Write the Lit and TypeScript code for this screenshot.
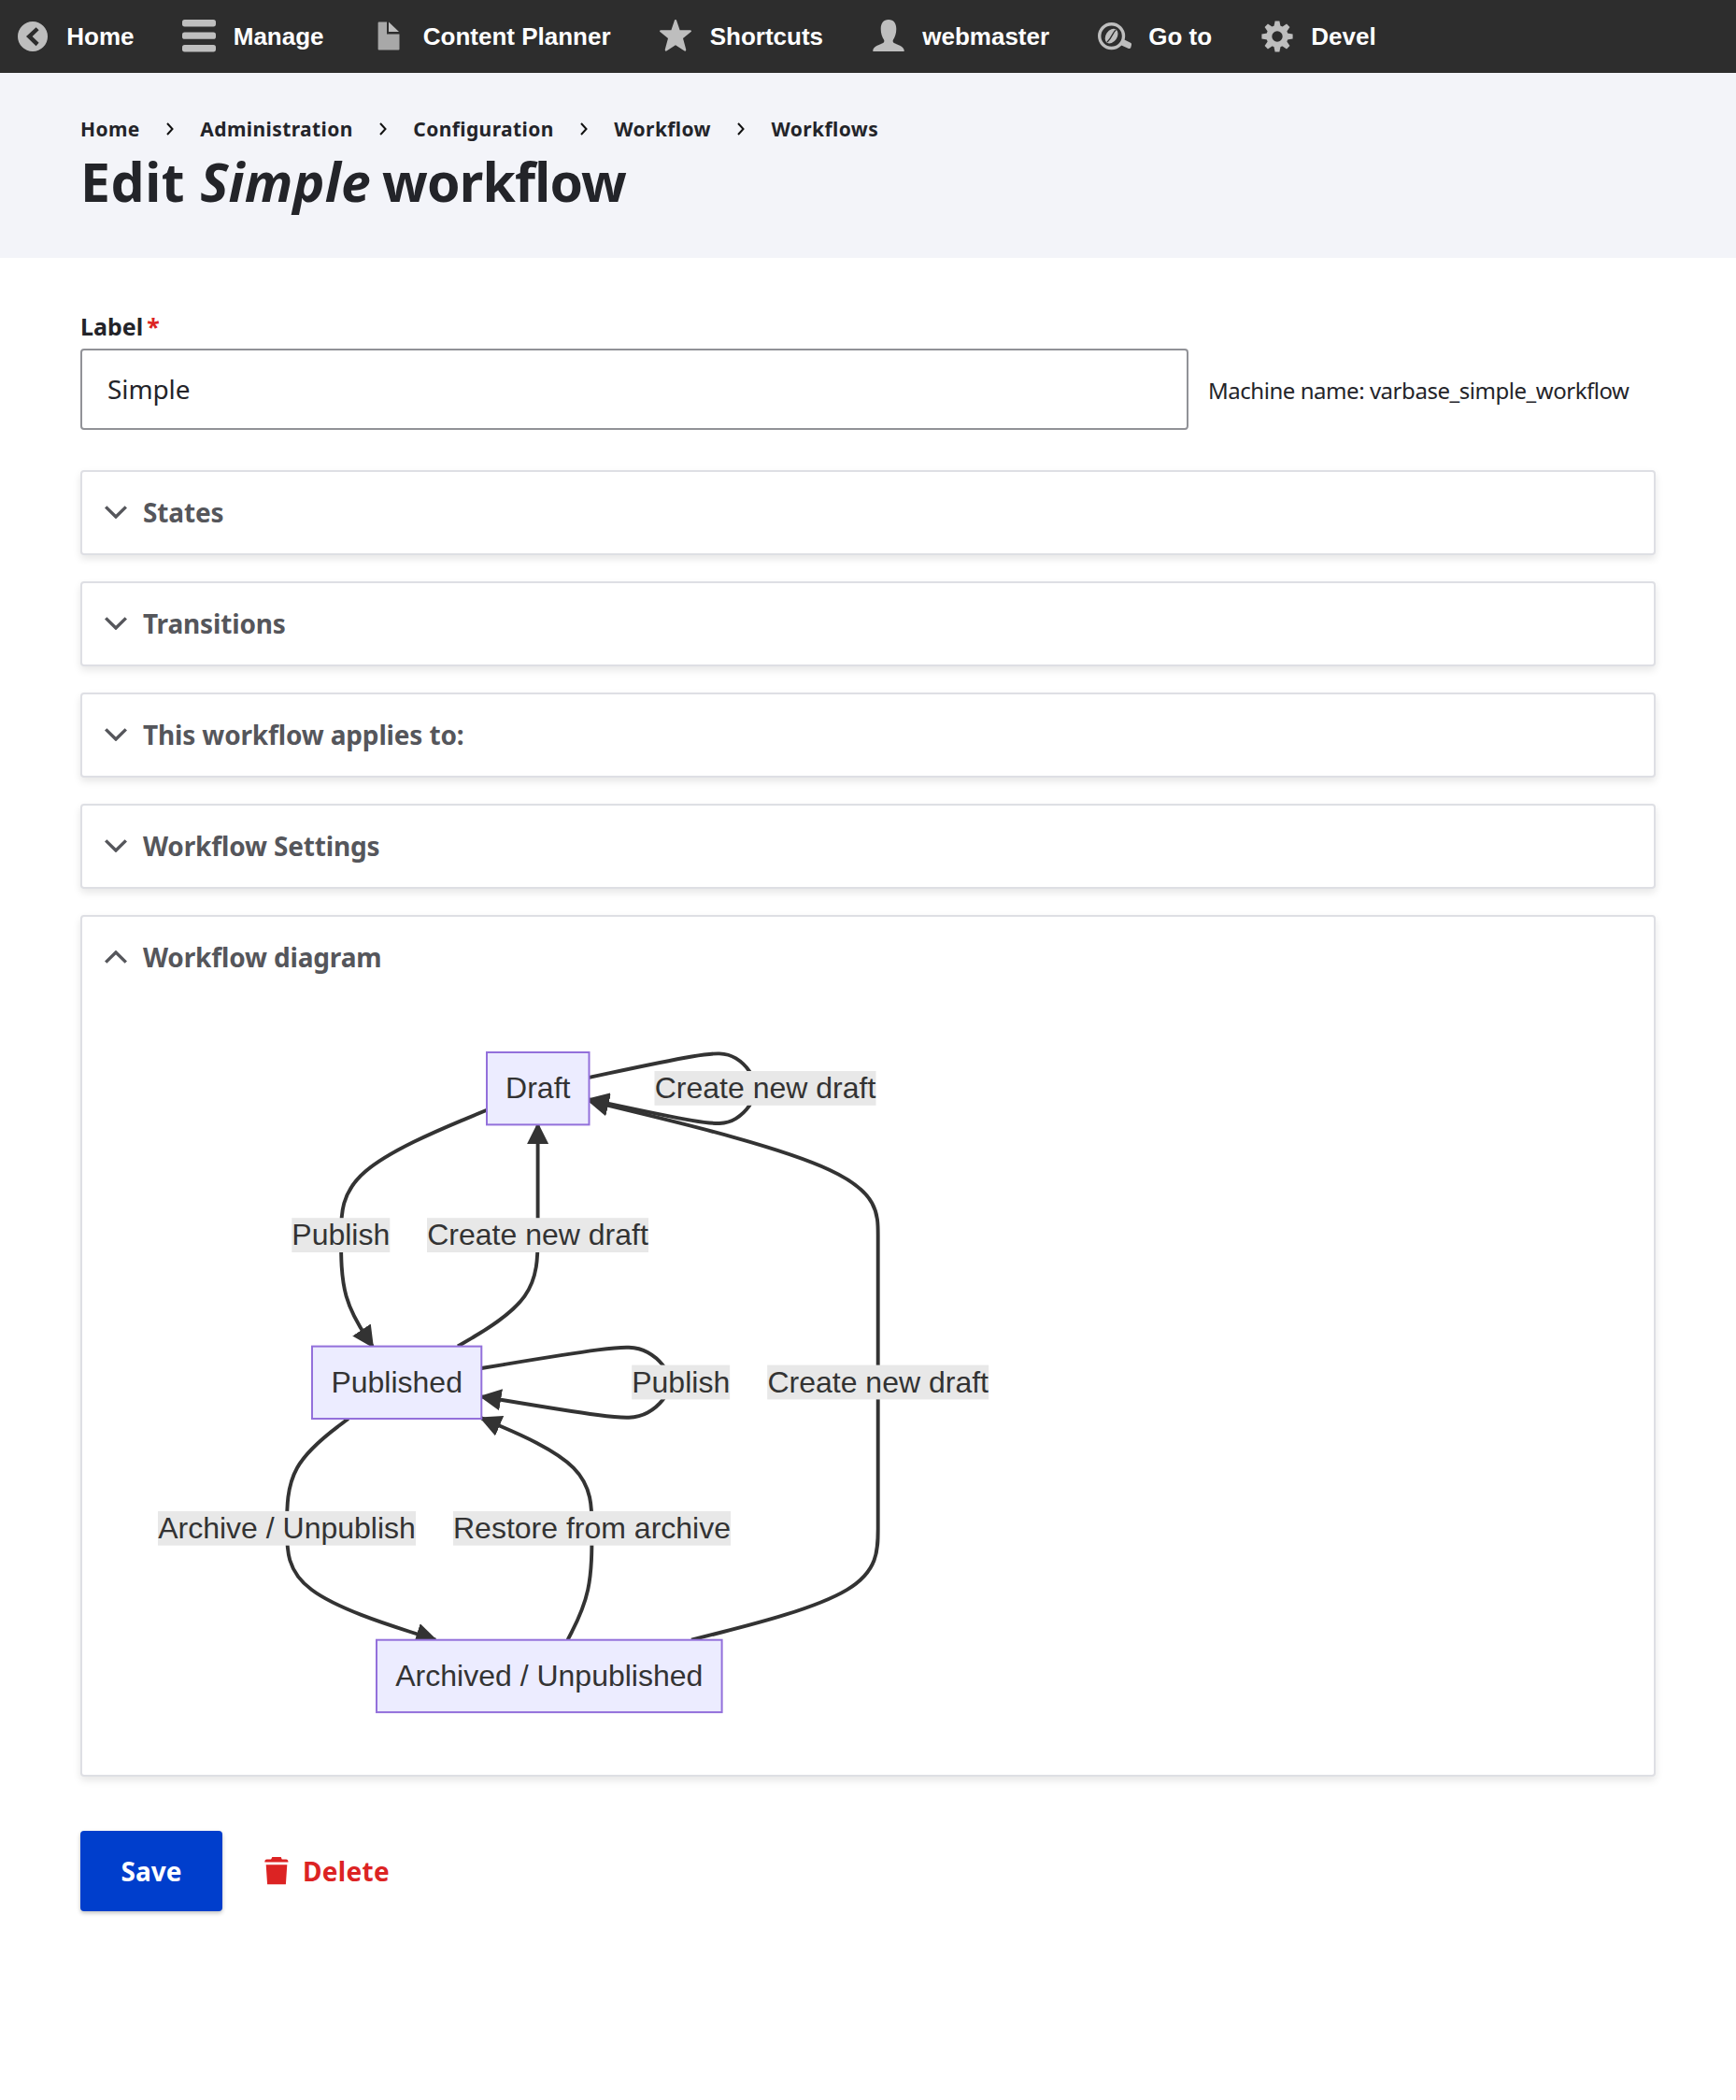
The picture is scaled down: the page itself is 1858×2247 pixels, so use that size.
import { LitElement, html, css, svg, nothing } from "lit";
import { customElement } from "lit/decorators.js";

type Point = [number, number];

const round = (n: number) => Math.round(n * 100) / 100;

/** Open uniform cubic B-spline through the given control points. */
function basisPath(points: Point[]): string {
  const [first] = points;
  let [x0, y0] = first;
  let [x1, y1] = points[1];
  let d = `M${x0},${y0}L${round((5 * x0 + x1) / 6)},${round((5 * y0 + y1) / 6)}`;
  const curve = (x: number, y: number) => {
    d += `C${[
      (2 * x0 + x1) / 3, (2 * y0 + y1) / 3,
      (x0 + 2 * x1) / 3, (y0 + 2 * y1) / 3,
      (x0 + 4 * x1 + x) / 6, (y0 + 4 * y1 + y) / 6,
    ].map(round).join(",")}`;
    x0 = x1; y0 = y1; x1 = x; y1 = y;
  };
  points.slice(2).forEach(([x, y]) => curve(x, y));
  curve(x1, y1);
  return `${d}L${x1},${y1}`;
}

const chevronPath = "M1.2 1.4 L12 12 L22.8 1.4";

const toolbarItems = [
  {
    label: "Home",
    icon: svg`<path fill-rule="evenodd" d="M18 2a16 16 0 1 0 0 32a16 16 0 1 0 0-32zM21.6 8.2L24.6 11.2L17.6 18L24.6 24.8L21.6 28.2L11 18z"/>`,
  },
  {
    label: "Manage",
    icon: svg`<rect y="0" width="36" height="7.4" rx="2.6"/><rect y="13.4" width="36" height="7.4" rx="2.6"/><rect y="27" width="36" height="7.4" rx="2.6"/>`,
  },
  {
    label: "Content Planner",
    icon: svg`<path fill="#a8a8a8" d="M7 2.4h9v13h13.5v16a1 1 0 0 1-1 1H7.6a1 1 0 0 1-1-1V3.4a1 1 0 0 1 1-1z"/><path d="M18 2.6L29 13H18z"/>`,
  },
  {
    label: "Shortcuts",
    icon: svg`<path d="M18 0c.8 0 1 .6 1.3 1.400l3.300 9.800h11c1.600 0 1.800 1.200.7 2.100l-8.300 6.700l3.200 11.800c.3 1.700-.8 2.300-2 1.500L18 27.200l-9.200 6.100c-1.300.8-2.300.2-2-1.500L10 20l-8.300-6.700c-1.100-.9-.8-2.100.7-2.100h11l3.300-9.800C17 .6 17.200 0 18 0z"/>`,
  },
  {
    label: "webmaster",
    icon: svg`<path d="M18 0c5.600 0 8.300 4 8.300 10c0 4.600-1.500 9-3.300 11.600c-.7 1.200-.5 2.600.8 3.400c2.600 1.500 10.600 3 11 8.200c0 .6-.4.9-1 .9H2.200c-.6 0-1-.3-1-.9c.4-5.200 8.400-6.700 11-8.200c1.300-.8 1.500-2.200.8-3.400C11.200 19 9.700 14.600 9.700 10c0-6 2.700-10 8.300-10z"/>`,
  },
  {
    label: "Go to",
    icon: svg`<path fill-rule="evenodd" d="M14.600 3a14.600 14.600 0 1 0 0 29.200a14.600 14.600 0 1 0 0-29.200zM14.600 6.400a11.200 11.200 0 1 1 0 22.400a11.200 11.200 0 1 1 0-22.400z"/><path d="M27.400 21l7.600 3.800c1 .6 1.200 1.200 1 2.200l-.6 2.600c-.4 1.400-1.600 1.800-3 1.200l-9.400-4.400z"/><g transform="rotate(34 14.600 17.600)"><ellipse cx="14.600" cy="17.600" rx="6" ry="8.600"/><path d="M14.800 9.600c-1.400 4 1.200 8-.4 16" fill="none" stroke="#2d2d2d" stroke-width="1.300"/></g>`,
  },
  {
    label: "Devel",
    icon: svg`<g transform="translate(18 18)"><circle r="8.700" fill="none" stroke="#bebebe" stroke-width="6"/>${[0, 45, 90, 135, 180, 225, 270, 315].map(
      (a) => svg`<path transform="rotate(${a})" d="M-3.600-10.500L-2.400-16.600h4.800L3.600-10.500z"/>`,
    )}</g>`,
  },
];

const nodes = [
  { label: "Draft", x: 521, y: 1126, w: 109.5, h: 77.4 },
  { label: "Published", x: 334, y: 1440.6, w: 181.3, h: 77.4 },
  { label: "Archived / Unpublished", x: 403, y: 1754.7, w: 369.6, h: 77.4 },
];

const edges: Point[][] = [
  [[521, 1187.7], [365, 1253], [365, 1321.7], [365, 1390], [398.7, 1440.5]],
  [[490, 1440.5], [575.6, 1390], [575.6, 1321.7], [575.6, 1253], [575.6, 1203.3]],
  [[630.5, 1152.9], [756.2, 1126], [787.6, 1126], [819, 1164.6], [787.6, 1203.3], [756.2, 1203.3], [630.5, 1176.3]],
  [[515.3, 1464], [657.6, 1440.5], [693.1, 1440.5], [728.7, 1479.2], [693.1, 1518], [657.6, 1518], [515.3, 1494.3]],
  [[740, 1754.7], [939.7, 1704], [939.7, 1635.6], [939.7, 1567.7], [939.7, 1479], [939.7, 1390], [939.7, 1321.7], [939.7, 1253], [630.5, 1177.9]],
  [[372.8, 1518], [307, 1567.7], [307, 1635.6], [307, 1704], [466.2, 1754.7]],
  [[607.6, 1754.7], [633.5, 1704], [633.5, 1635.6], [633.5, 1567.7], [515.3, 1517.4]],
];

const edgeLabels = [
  { label: "Create new draft", x: 819, y: 1164.4, w: 237 },
  { label: "Publish", x: 364.8, y: 1321.6, w: 105 },
  { label: "Create new draft", x: 575.5, y: 1321.6, w: 237 },
  { label: "Publish", x: 728.7, y: 1479, w: 105 },
  { label: "Create new draft", x: 939.7, y: 1479, w: 237 },
  { label: "Archive / Unpublish", x: 307, y: 1635.3, w: 276 },
  { label: "Restore from archive", x: 633.5, y: 1635.3, w: 297 },
];

@customElement("admin-toolbar")
export class AdminToolbar extends LitElement {
  static styles = css`
    :host {
      display: block;
      background: #2d2d2d;
    }
    .bar {
      display: flex;
      gap: 51.9px;
      height: 78px;
      padding-left: 17px;
      align-items: center;
      font: bold 26px/30px "Liberation Sans", sans-serif;
      color: #fff;
    }
    .item {
      display: flex;
      gap: 18.3px;
      align-items: center;
      white-space: nowrap;
    }
    .icon {
      display: block;
      width: 36px;
      height: 36px;
      fill: #bebebe;
    }
  `;

  render() {
    return html`<nav class="bar">
      ${toolbarItems.map(
        (item) => html`<a class="item">
          <svg class="icon" viewBox="0 0 36 36">${item.icon}</svg><span>${item.label}</span>
        </a>`,
      )}
    </nav>`;
  }
}

@customElement("workflow-diagram")
export class WorkflowDiagram extends LitElement {
  static styles = css`
    :host {
      display: block;
    }
    .canvas {
      display: block;
      width: 940px;
      height: 740px;
    }
    .edge {
      fill: none;
      stroke: #333;
      stroke-width: 3.9px;
    }
    .arrow {
      fill: #333;
    }
    .edge-bg {
      fill: #e8e8e8;
    }
    .node {
      fill: #ececff;
      stroke: #9370db;
      stroke-width: 2px;
    }
    .text {
      font: 32px "Liberation Sans", sans-serif;
      fill: #333;
      text-anchor: middle;
    }
  `;

  render() {
    return html`<svg class="canvas" viewBox="140 1110 940 740">
      <defs>
        <marker id="arrow" viewBox="0 0 10 10" refX="9" refY="5" markerUnits="userSpaceOnUse"
          markerWidth="23.4" markerHeight="23.4" orient="auto">
          <path class="arrow" d="M0 0L10 5L0 10z"></path>
        </marker>
      </defs>
      ${edges.map((points) => svg`<path class="edge" d=${basisPath(points)} marker-end="url(#arrow)"/>`)}
      ${edgeLabels.map(
        (l) => svg`<rect class="edge-bg" x=${l.x - l.w / 2} y=${l.y - 18.4} width=${l.w} height="36.800"/>
          <text class="text" x=${l.x} y=${l.y + 10.6}>${l.label}</text>`,
      )}
      ${nodes.map(
        (n) => svg`<rect class="node" x=${n.x} y=${n.y} width=${n.w} height=${n.h}/>
          <text class="text" x=${n.x + n.w / 2} y=${n.y + 49.4}>${n.label}</text>`,
      )}
    </svg>`;
  }
}

@customElement("detail-panel")
export class DetailPanel extends LitElement {
  static properties = { label: {}, open: { type: Boolean } };
  declare label: string;
  declare open: boolean;

  static styles = css`
    :host {
      display: block;
      box-sizing: border-box;
      border: 2px solid #dedfe4;
      border-radius: 4px;
      background: #fff;
      box-shadow: 0 4px 8px rgba(0, 0, 0, 0.1);
    }
    .summary {
      display: flex;
      align-items: center;
      gap: 17px;
      height: 86px;
      padding-left: 24px;
      color: #55565b;
      font-weight: 700;
      font-size: 28px;
      letter-spacing: -0.15px;
    }
    .chevron {
      width: 24px;
      height: 14px;
      fill: none;
      stroke: #55565b;
      stroke-width: 3.4px;
    }
    .chevron.up {
      transform: rotate(180deg);
    }
  `;

  render() {
    return html`<div class="summary">
        <svg class="chevron ${this.open ? "up" : ""}" viewBox="0 0 24 14"><path d=${chevronPath}></path></svg>
        <span>${this.label}</span>
      </div>
      ${this.open ? html`<slot></slot>` : nothing}`;
  }
}

@customElement("app-root")
export class AppRoot extends LitElement {
  static styles = css`
    :host {
      display: block;
      min-height: 2247px;
      background: #fff;
      color: #232429;
      font-family: "Noto Sans", "Open Sans", sans-serif;
    }
    .header {
      box-sizing: border-box;
      height: 198px;
      padding: 46px 86px 0;
      background: #f3f4f9;
    }
    .crumbs {
      display: flex;
      align-items: center;
      height: 28px;
      font-size: 21px;
      line-height: 28px;
      font-weight: 700;
      letter-spacing: 0.4px;
    }
    .sep {
      width: 8px;
      height: 14px;
      margin: 0 28.5px 0 28px;
      fill: none;
      stroke: #111;
      stroke-width: 2px;
    }
    .title {
      margin: 2px 0 0;
      font-size: 57px;
      line-height: 80px;
      font-weight: 700;
      letter-spacing: -0.8px;
    }
    .verb {
      letter-spacing: 0.6px;
    }
    .name {
      margin: 0 -2px 0 2px;
      letter-spacing: 0.2px;
    }
    .main {
      padding: 57px 86px 0;
    }
    .label {
      display: block;
      font-size: 25px;
      line-height: 32px;
      font-weight: 700;
      letter-spacing: 0;
    }
    .required {
      color: #dc2323;
      margin-left: 4px;
    }
    .field {
      display: flex;
      align-items: center;
      gap: 21px;
      margin-top: 8px;
    }
    .input {
      box-sizing: border-box;
      width: 1186px;
      height: 87px;
      padding: 0 27px 2px;
      border: 2px solid #919297;
      border-radius: 4px;
      background: #fff;
      color: #232429;
      font: 28px "Noto Sans", sans-serif;
      letter-spacing: -0.1px;
    }
    .machine {
      padding-top: 1px;
      font-size: 24px;
      letter-spacing: -0.46px;
      white-space: nowrap;
    }
    .panels {
      display: grid;
      gap: 28.5px;
      margin-top: 43px;
      grid-template-rows: repeat(4, 90.5px) 922px;
    }
    .diagram {
      margin: 43px 0 0 52px;
    }
    .actions {
      display: flex;
      align-items: center;
      gap: 45px;
      margin-top: 58px;
    }
    .save {
      width: 152px;
      height: 86px;
      padding: 0;
      border: 0;
      border-radius: 4px;
      background: #003ecc;
      box-shadow: 0 2px 4px rgba(0, 0, 0, 0.25);
      color: #fff;
      font: 700 28px "Noto Sans", sans-serif;
      letter-spacing: 0;
    }
    .delete {
      display: flex;
      align-items: center;
      gap: 15px;
      padding-bottom: 1px;
      color: #dc2323;
      font-weight: 700;
      font-size: 28px;
      letter-spacing: 0.3px;
    }
    .trash {
      width: 26px;
      height: 30px;
      fill: #dc2323;
    }
  `;

  render() {
    const crumbs = ["Home", "Administration", "Configuration", "Workflow", "Workflows"];
    return html`
      <admin-toolbar></admin-toolbar>
      <header class="header">
        <nav class="crumbs">
          ${crumbs.map(
            (c, i) => html`${i
                ? html`<svg class="sep" viewBox="0 0 8 14"><path d="M1 1L6.5 7L1 13"></path></svg>`
                : nothing}<a>${c}</a>`,
          )}
        </nav>
        <h1 class="title"><span class="verb">Edit</span> <em class="name">Simple</em> workflow</h1>
      </header>
      <main class="main">
        <label class="label">Label<span class="required">*</span></label>
        <div class="field">
          <input class="input" value="Simple" />
          <span class="machine">Machine name: varbase_simple_workflow</span>
        </div>
        <div class="panels">
          <detail-panel label="States"></detail-panel>
          <detail-panel label="Transitions"></detail-panel>
          <detail-panel label="This workflow applies to:"></detail-panel>
          <detail-panel label="Workflow Settings"></detail-panel>
          <detail-panel label="Workflow diagram" open>
            <workflow-diagram class="diagram"></workflow-diagram>
          </detail-panel>
        </div>
        <div class="actions">
          <button class="save">Save</button>
          <a class="delete">
            <svg class="trash" viewBox="0 0 26 30"><path d="M9 0h8c.8 0 1 .6 1.200 1.200L18.800 2.500h4.500c1.400 0 2.200 1 2.200 3H.3c0-2 .8-3 2.200-3H7L7.800 1.200C8 .6 8.200 0 9 0zM1.700 8.300h22.600L22.900 29.300H3.100z"></path></svg>
            <span>Delete</span>
          </a>
        </div>
      </main>
    `;
  }
}
